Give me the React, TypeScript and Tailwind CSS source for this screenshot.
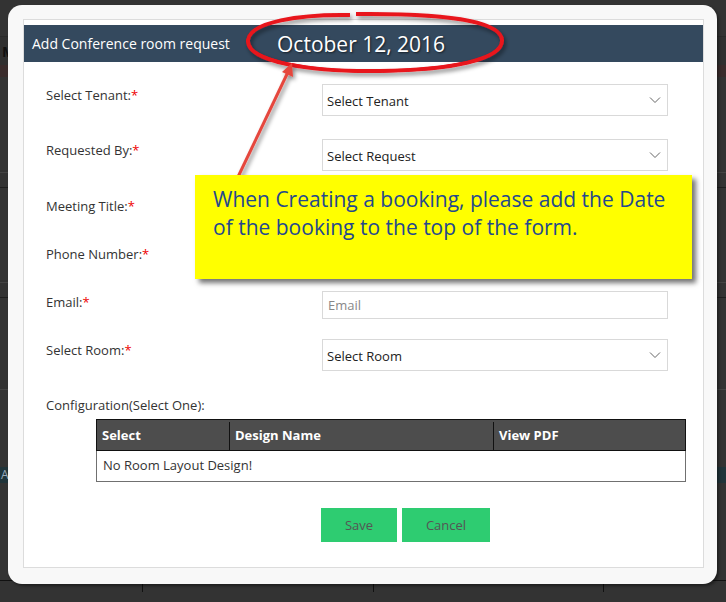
import React from "react";

const font = { fontFamily: '"Open Sans", "Noto Sans", sans-serif' };

function Chevron() {
  return (
    <svg width="12" height="8" viewBox="0 0 12 8" className="shrink-0">
      <polyline points="1,1.5 6,6.5 11,1.5" fill="none" stroke="#666" strokeWidth="1" />
    </svg>
  );
}

function Label({ text }: { text: string }) {
  return (
    <div className="w-[276px] shrink-0 pt-[2px] text-[13px] leading-[18px] text-[#333]">
      {text}
      <span className="text-[#e00]">*</span>
    </div>
  );
}

function SelectBox({ text }: { text: string }) {
  return (
    <div className="flex h-[32px] w-[346px] items-center justify-between border border-[#d9d9d9] bg-white pl-[4px] pr-[6px] text-[13px] text-[#222]">
      <span className="pt-[4px]">{text}</span>
      <Chevron />
    </div>
  );
}

function InputBox({ placeholder }: { placeholder?: string }) {
  return (
    <div className="flex h-[28px] w-[346px] items-center border border-[#d9d9d9] bg-white pl-[5px] pt-[2px] text-[13px] text-[#888]">
      {placeholder}
    </div>
  );
}

export default function App() {
  return (
    <div className="relative h-[602px] w-[726px] overflow-hidden bg-[#333]" style={font}>
      {/* background calendar */}
      <div className="flex h-full flex-col">
        <div className="h-[37px] border-b border-[#2a2a2a]" />
        <div className="flex h-[28px] items-center bg-[#303030] pl-[2px] text-[14px] font-bold text-[#111]">M</div>
        <div className="h-[12px] bg-[#3a2c2c]" />
        <div className="h-[96px] border-b border-[#444]" />
        <div className="h-[15px] border-b border-[#1e1e1e]" />
        <div className="h-[95px] border-b border-[#444]" />
        <div className="h-[15px] border-b border-[#1e1e1e]" />
        <div className="h-[92px] border-b border-[#444]" />
        <div className="h-[77px]" />
        <div className="flex h-[16px] items-center bg-[#20343a] pl-[1px] text-[12px] text-[#9ab]">A</div>
        <div className="h-[86px]" />
        <div className="flex h-[11px]">
          <div className="w-[143px] border-r border-[#111] pr-[2px] text-right text-[10px] leading-[11px] text-[#111]">24</div>
          <div className="w-[231px] border-r border-[#111] pr-[2px] text-right text-[10px] leading-[11px] text-[#111]">25</div>
          <div className="w-[230px] border-r border-[#111] pr-[2px] text-right text-[10px] leading-[11px] text-[#111]">26</div>
        </div>
        <div className="flex h-[12px] border-t border-[#111]">
          <div className="w-[143px] border-r border-[#111]" />
          <div className="w-[231px] border-r border-[#111]" />
          <div className="w-[230px] border-r border-[#111]" />
        </div>
      </div>

      {/* modal */}
      <div className="absolute left-[8px] top-[5px] h-[579px] w-[709px] rounded-[14px] bg-[#f8f8f8] pl-[15px] pt-[14px] shadow-[2px_2px_3px_rgba(0,0,0,0.4)]">
        <div className="flex h-[549px] w-[681px] flex-col border border-[#dcdcdc] bg-white pt-[5px]">
          <div className="flex h-[37px] items-center bg-[#34495e] pl-[8px] text-[14px] text-white">
            Add Conference room request
          </div>
          <div className="flex flex-col pl-[22px] pt-[22px]">
            <div className="flex h-[55px] items-start">
              <Label text="Select Tenant:" />
              <SelectBox text="Select Tenant" />
            </div>
            <div className="flex h-[56px] items-start">
              <Label text="Requested By:" />
              <SelectBox text="Select Request" />
            </div>
            <div className="flex h-[48px] items-start">
              <Label text="Meeting Title:" />
              <InputBox />
            </div>
            <div className="flex h-[48px] items-start">
              <Label text="Phone Number:" />
              <InputBox />
            </div>
            <div className="flex h-[48px] items-start">
              <Label text="Email:" />
              <InputBox placeholder="Email" />
            </div>
            <div className="flex h-[57px] items-start">
              <Label text="Select Room:" />
              <SelectBox text="Select Room" />
            </div>
            <div className="text-[13px] leading-[18px] text-[#333]">Configuration(Select One):</div>
          </div>
          <div className="ml-[72px] mt-[5px] w-[590px] text-[13px]">
            <div className="flex h-[32px] border border-[#111] bg-[#4d4d4d] pt-[2px] font-bold text-white">
              <div className="flex w-[133px] items-center border-r border-[#111] pl-[5px]">Select</div>
              <div className="flex w-[264px] items-center border-r border-[#111] pl-[5px]">Design Name</div>
              <div className="flex flex-1 items-center pl-[5px]">View PDF</div>
            </div>
            <div className="flex h-[31px] items-center border border-t-0 border-[#707070] pl-[6px] text-[#333]">
              No Room Layout Design!
            </div>
          </div>
          <div className="ml-[297px] mt-[26px] flex gap-[5px] text-[13px] text-[#555]">
            <div className="flex h-[34px] w-[76px] items-center justify-center bg-[#2ecc71] pt-[2px]">Save</div>
            <div className="flex h-[34px] w-[88px] items-center justify-center bg-[#2ecc71] pt-[2px]">Cancel</div>
          </div>
        </div>
      </div>

      {/* annotation: ellipse + arrow */}
      <svg className="absolute left-0 top-0" width="726" height="602" viewBox="0 0 726 602">
        <defs>
          <filter id="sh" x="-20%" y="-40%" width="140%" height="180%">
            <feDropShadow dx="2" dy="3" stdDeviation="2" floodColor="#000" floodOpacity="0.45" />
          </filter>
        </defs>
        <g filter="url(#sh)">
          <path
            d="M350 15 C 300 14, 250 22, 248 40 C 246 62, 310 72, 380 71 C 450 70, 503 60, 502 40 C 501 22, 450 13, 356 14"
            fill="none"
            stroke="#e8141b"
            strokeWidth="4"
          />
          <path
            d="M255 52 C 275 66, 330 72, 380 71 C 440 70, 490 62, 500 47"
            fill="none"
            stroke="#e8141b"
            strokeWidth="3"
          />
        </g>
        <g filter="url(#sh)">
          <line x1="237" y1="179" x2="288" y2="72" stroke="#e5473e" strokeWidth="3" />
          <polygon points="292,63 293,77 282,72" fill="#e5473e" />
        </g>
      </svg>
      <div
        className="absolute left-[277px] top-[30px] text-[21px] leading-[28px] text-white"
        style={{ textShadow: "1px 1px 2px rgba(0,0,0,0.6)" }}
      >
        October 12, 2016
      </div>

      {/* yellow note */}
      <div className="absolute left-[195px] top-[175px] h-[104px] w-[497px] bg-[#ffff00] pl-[18px] pt-[10px] text-[21px] leading-[28px] text-[#24488e] shadow-[4px_4px_5px_rgba(0,0,0,0.55)]">
        When Creating a booking, please add the Date
        <br />
        of the booking to the top of the form.
      </div>
    </div>
  );
}
